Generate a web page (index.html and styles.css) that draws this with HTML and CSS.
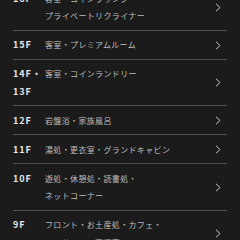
FILE: index.html
```html
<!DOCTYPE html>
<html lang="ja">
<head>
<meta charset="utf-8">
<link rel="stylesheet" href="styles.css">
</head>
<body>
<ul class="floors">
  <li class="row"><span class="label">16F</span><span class="desc">客室・コインラウンジ・<br>プライベートリクライナー</span><svg class="chev" viewBox="0 0 6 9"><polyline points="1,0.8 5,4.5 1,8.2"/></svg></li>
  <li class="row"><span class="label">15F</span><span class="desc">客室・プレミアムルーム</span><svg class="chev" viewBox="0 0 6 9"><polyline points="1,0.8 5,4.5 1,8.2"/></svg></li>
  <li class="row"><span class="label">14F・<br>13F</span><span class="desc">客室・コインランドリー</span><svg class="chev" viewBox="0 0 6 9"><polyline points="1,0.8 5,4.5 1,8.2"/></svg></li>
  <li class="row"><span class="label">12F</span><span class="desc">岩盤浴・家族風呂</span><svg class="chev" viewBox="0 0 6 9"><polyline points="1,0.8 5,4.5 1,8.2"/></svg></li>
  <li class="row"><span class="label">11F</span><span class="desc">湯処・更衣室・グランドキャビン</span><svg class="chev" viewBox="0 0 6 9"><polyline points="1,0.8 5,4.5 1,8.2"/></svg></li>
  <li class="row"><span class="label">10F</span><span class="desc">遊処・休憩処・読書処・<br>ネットコーナー</span><svg class="chev" viewBox="0 0 6 9"><polyline points="1,0.8 5,4.5 1,8.2"/></svg></li>
  <li class="row"><span class="label">9F</span><span class="desc">フロント・お土産処・カフェ・<br>マッサージ・喫煙室</span><svg class="chev" viewBox="0 0 6 9"><polyline points="1,0.8 5,4.5 1,8.2"/></svg></li>
</ul>
</body>
</html>
```
FILE: styles.css
```css
html, body {
  margin: 0;
  padding: 0;
  background: #1b1b1b;
  overflow: hidden;
}
.floors {
  list-style: none;
  margin: -15.4px 13px 0 13px;
  padding: 0;
  font-family: "Noto Sans CJK JP", "Noto Sans", sans-serif;
}
.row {
  display: flex;
  align-items: flex-start;
  padding: 5.3px 0;
  border-bottom: 1px solid #4d4d4d;
  line-height: 17.4px;
}
.label {
  width: 32px;
  flex: none;
  font-size: 9px;
  font-weight: 700;
  letter-spacing: 1px;
  color: #e6e6e6;
}
.desc {
  flex: 1;
  font-size: 8px;
  letter-spacing: 0.35px;
  color: #bdbdbd;
}
.chev {
  align-self: center;
  width: 6px;
  height: 9px;
  margin-right: 6px;
  flex: none;
}
.chev polyline {
  fill: none;
  stroke: #c4c4c4;
  stroke-width: 1;
}
```
